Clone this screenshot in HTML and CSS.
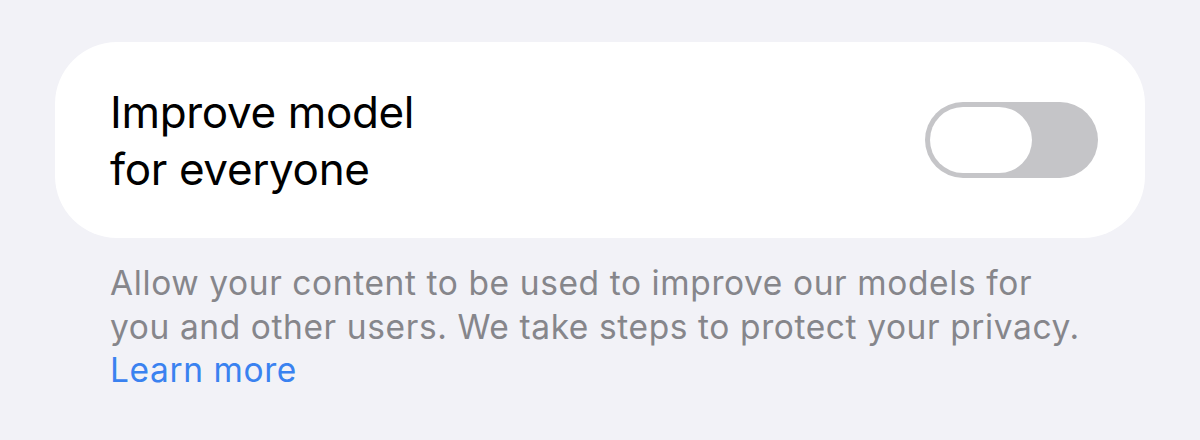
FILE: index.html
```html
<!DOCTYPE html>
<html lang="en">
<head>
<meta charset="utf-8">
<title>Improve model</title>
<link rel="stylesheet" href="styles.css">
</head>
<body>
<div class="page">
  <div class="card">
    <div class="label">Improve model<br>for everyone</div>
    <div class="toggle" role="switch" aria-checked="false">
      <div class="knob"></div>
    </div>
  </div>
  <p class="footer">Allow your content to be used to improve our models for<br>you and other users. We take steps to protect your privacy.<br><a class="link" href="#">Learn more</a></p>
</div>
</body>
</html>
```

FILE: styles.css
```css
html, body {
  margin: 0;
  padding: 0;
  background: #f2f2f7;
}
body {
  width: 1200px;
  height: 440px;
  overflow: hidden;
  font-family: "Inter", "Liberation Sans", sans-serif;
}
.page {
  padding: 42px 55px 0 55px;
}
.card {
  background: #ffffff;
  height: 196px;
  border-radius: 62px;
  display: flex;
  align-items: center;
  justify-content: space-between;
  padding: 0 47px 0 55px;
  box-sizing: border-box;
}
.label {
  font-size: 44px;
  line-height: 57px;
  letter-spacing: -0.35px;
  color: #000;
  margin-top: 2px;
}
.toggle {
  width: 173px;
  height: 76px;
  border-radius: 38px;
  background: #c5c5c8;
  padding: 5px;
  box-sizing: border-box;
  display: flex;
  align-items: center;
}
.knob {
  width: 102px;
  height: 66px;
  border-radius: 33px;
  background: #ffffff;
}
.footer {
  margin: 24px 0 0 55px;
  font-size: 33.5px;
  line-height: 43.5px;
  letter-spacing: 0.6px;
  color: #86868b;
}
.link {
  color: #3a82f0;
  text-decoration: none;
}
```
